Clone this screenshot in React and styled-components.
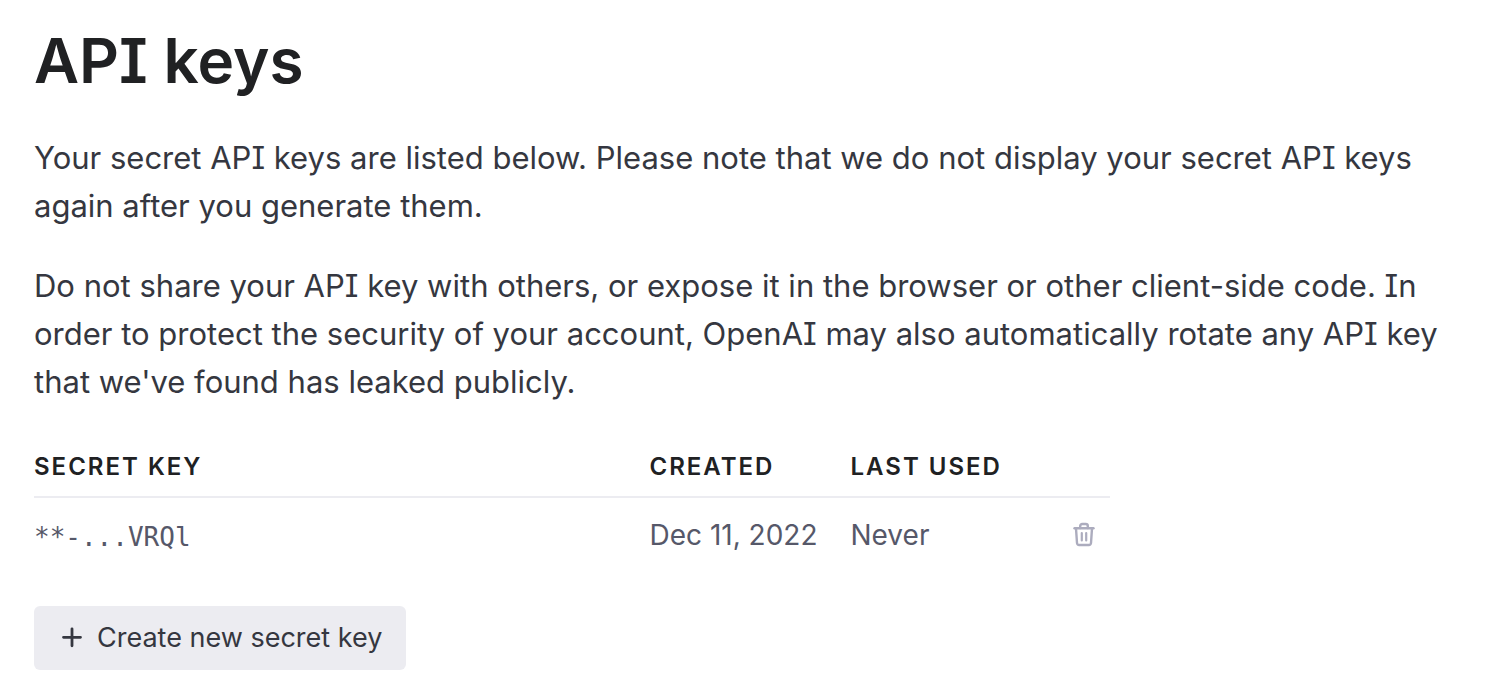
import React from 'react';
import styled, { createGlobalStyle } from 'styled-components';

const GlobalStyle = createGlobalStyle`
  * {
    box-sizing: border-box;
  }

  body {
    margin: 0;
    background: #ffffff;
    color: #353740;
    font-family: Inter, "Liberation Sans", sans-serif;
    font-feature-settings: "cv08" 1;
    font-size: 31px;
    line-height: 48px;
  }
`;

const Page = styled.main`
  padding: 23px 34px;
`;

const Title = styled.h1`
  margin: 0 0 35px;
  color: #202123;
  font-size: 62px;
  font-weight: 600;
  line-height: 76px;
`;

const Text = styled.p`
  margin: 0 0 32px;
`;

const Table = styled.table`
  width: 75%;
  margin-bottom: 34px;
  border-collapse: collapse;
  table-layout: fixed;
`;

const HeadCell = styled.th`
  width: ${props => props.$width};
  padding: 13px 0;
  border-bottom: 2px solid #ececf1;
  color: #202123;
  font-size: 24px;
  font-weight: 600;
  letter-spacing: 2px;
  line-height: 32px;
  text-align: left;
  text-transform: uppercase;
  white-space: nowrap;
`;

const Cell = styled.td`
  padding: 13px 0;
  color: #565869;
  font-size: 28px;
  white-space: nowrap;
`;

const KeyCell = styled(Cell)`
  padding: 15px 0 11px;
  font-family: "DejaVu Sans Mono", monospace;
  font-size: 26px;
`;

const IconButton = styled.button`
  display: flex;
  margin-left: auto;
  padding: 0 12px;
  border: none;
  background: none;
  color: #acacbe;
  cursor: pointer;
`;

const CreateButton = styled.button`
  display: inline-flex;
  align-items: center;
  gap: 11px;
  height: 64px;
  padding: 0 24px;
  border: none;
  border-radius: 6px;
  background: #ececf1;
  color: #353740;
  font: inherit;
  font-feature-settings: inherit;
  font-size: 27px;
  cursor: pointer;
`;

function TrashIcon() {
  return (
    <svg width="28" height="28" viewBox="0 0 28 28" fill="none" stroke="currentColor" strokeWidth="2.4" strokeLinecap="round" strokeLinejoin="round" aria-hidden="true">
      <path d="M4.5 7.2h19" />
      <path d="M10.2 7V5a2 2 0 0 1 2-2h3.6a2 2 0 0 1 2 2v2" />
      <path d="M6 7.5l1 14.5a2.2 2.2 0 0 0 2.2 2h9.6a2.2 2.2 0 0 0 2.2-2L22 7.5" />
      <path d="M11.8 12v7.4M16.2 12v7.4" strokeWidth="2.2" />
    </svg>
  );
}

function PlusIcon() {
  return (
    <svg width="28" height="28" viewBox="0 0 28 28" fill="none" stroke="currentColor" strokeWidth="2.8" strokeLinecap="round" aria-hidden="true">
      <path d="M14 4.8v17M5.5 13.3h17" />
    </svg>
  );
}

const keys = [{ name: '**-...VRQl', created: 'Dec 11, 2022', lastUsed: 'Never' }];

function KeyTable({ items }) {
  return (
    <Table>
      <thead>
        <tr>
          <HeadCell scope="col">Secret key</HeadCell>
          <HeadCell scope="col" $width="201px">Created</HeadCell>
          <HeadCell scope="col" $width="200px">Last used</HeadCell>
          <HeadCell as="td" $width="59px" />
        </tr>
      </thead>
      <tbody>
        {items.map(item => (
          <tr key={item.name}>
            <KeyCell>{item.name}</KeyCell>
            <Cell>{item.created}</Cell>
            <Cell>{item.lastUsed}</Cell>
            <Cell>
              <IconButton type="button" aria-label="Delete key">
                <TrashIcon />
              </IconButton>
            </Cell>
          </tr>
        ))}
      </tbody>
    </Table>
  );
}

function App() {
  return (
    <Page>
      <GlobalStyle />
      <Title>API keys</Title>
      <Text>
        Your secret API keys are listed below. Please note that we do not display your secret API keys
        again after you generate them.
      </Text>
      <Text>
        Do not share your API key with others, or expose it in the browser or other client-side code. In
        order to protect the security of your account, OpenAI may also automatically rotate any API key
        that we've found has leaked publicly.
      </Text>
      <KeyTable items={keys} />
      <CreateButton type="button">
        <PlusIcon />
        Create new secret key
      </CreateButton>
    </Page>
  );
}

export default App;
